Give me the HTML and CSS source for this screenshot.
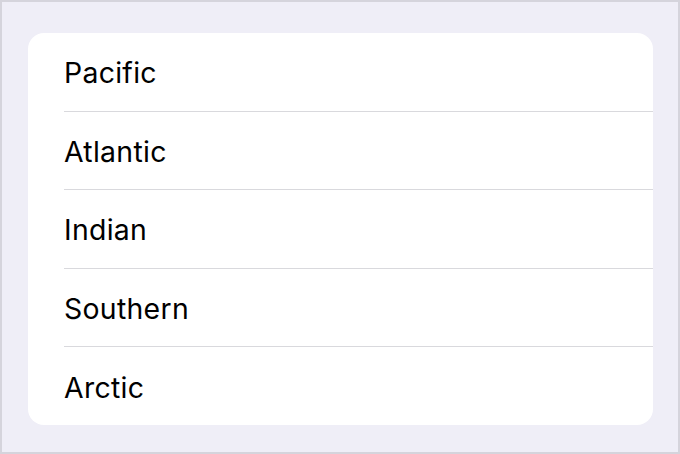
FILE: index.html
```html
<!DOCTYPE html>
<html>
<head>
<meta charset="utf-8">
<link rel="stylesheet" href="styles.css">
</head>
<body>
<div class="frame">
  <ul class="list">
    <li class="row"><span class="label">Pacific</span></li>
    <li class="row"><span class="label">Atlantic</span></li>
    <li class="row"><span class="label">Indian</span></li>
    <li class="row"><span class="label">Southern</span></li>
    <li class="row"><span class="label">Arctic</span></li>
  </ul>
</div>
</body>
</html>
```
FILE: styles.css
```css
html, body {
  margin: 0;
  padding: 0;
}
body {
  width: 680px;
  height: 454px;
  overflow: hidden;
}
.frame {
  box-sizing: border-box;
  width: 680px;
  height: 454px;
  border: 2px solid #d5d4dc;
  background: #efeef7;
  padding: 31px 25px 27px 26px;
}
.list {
  list-style: none;
  margin: 0;
  padding: 0 0 0 36px;
  background: #ffffff;
  border-radius: 16px;
  height: 392px;
  display: flex;
  flex-direction: column;
}
.row {
  flex: 1;
  display: flex;
  align-items: center;
  border-bottom: 1px solid #d9d9dd;
  font-family: Inter, "Liberation Sans", sans-serif;
  font-size: 28.4px;
  color: #000;
  letter-spacing: 0.3px;
}
.row:last-child {
  border-bottom: none;
}
.label {
  margin-top: 2px;
}
```
